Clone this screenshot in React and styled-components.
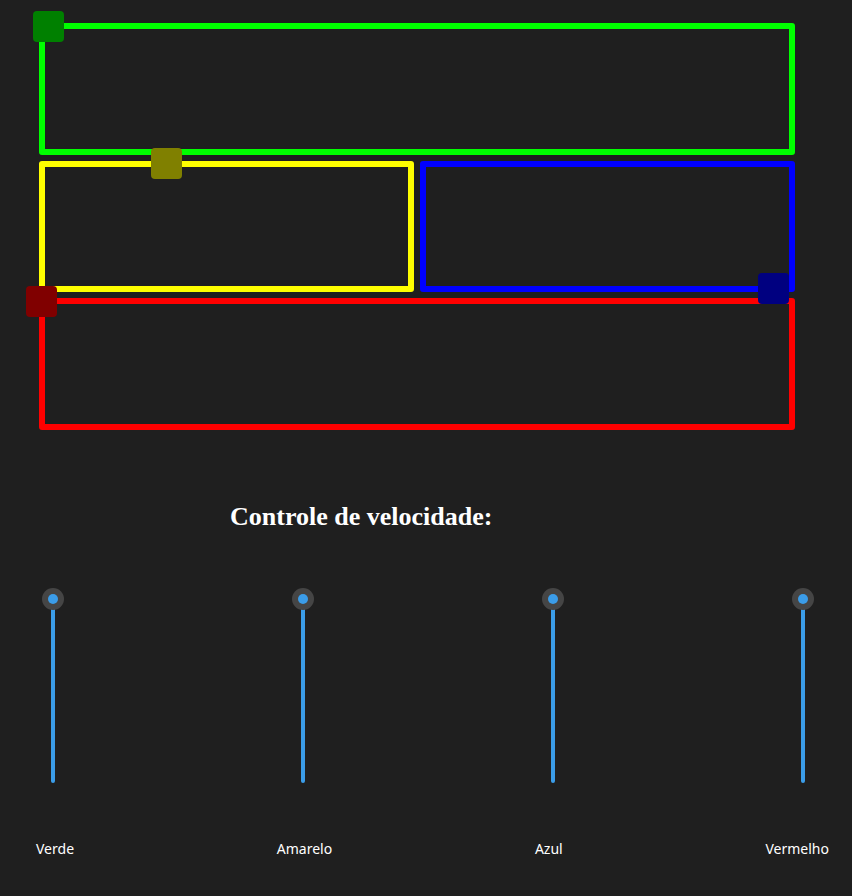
import React from "react";
import styled, { createGlobalStyle } from "styled-components";

const GlobalStyle = createGlobalStyle`
  html, body {
    margin: 0;
    padding: 0;
    background: #1f1f1f;
  }
  body {
    font-family: "Noto Sans", "Liberation Sans", sans-serif;
    color: #ffffff;
  }
`;

const tracks = [
  { name: "verde", line: "#00ff00", span: 2, height: 132 },
  { name: "amarelo", line: "#ffff00", span: 1, height: 131 },
  { name: "azul", line: "#0000ff", span: 1, height: 131 },
  { name: "vermelho", line: "#ff0000", span: 2, height: 132 },
];

// trens sobre os trilhos (posição relativa ao canto do mapa)
const trains = [
  { name: "verde", color: "#008000", x: -6, y: -12 },
  { name: "amarelo", color: "#808000", x: 112, y: 125 },
  { name: "azul", color: "#000080", x: 719, y: 250 },
  { name: "vermelho", color: "#800000", x: -13, y: 263 },
];

const labels = ["Verde", "Amarelo", "Azul", "Vermelho"];

const Page = styled.div`
  width: 852px;
  height: 896px;
  padding-top: 23px;
  box-sizing: border-box;
  overflow: hidden;
`;

const Map = styled.div`
  position: relative;
  margin-left: 39px;
  width: 756px;
  display: grid;
  grid-template-columns: 1fr 1fr;
  gap: 6px;
`;

const Track = styled.div`
  grid-column: span ${(p) => p.span};
  height: ${(p) => p.h}px;
  box-sizing: border-box;
  border: 6px solid ${(p) => p.color};
  border-radius: 3px;
`;

const Train = styled.div`
  position: absolute;
  width: 31px;
  height: 31px;
  border-radius: 4px;
  background: ${(p) => p.color};
`;

const Title = styled.h2`
  margin: 72px 0 0 230px;
  font-family: "Liberation Serif", "Times New Roman", serif;
  font-size: 26px;
  font-weight: bold;
  color: #ffffff;
`;

const SliderRow = styled.div`
  margin-top: 56px;
  padding: 0 38px 0 42px;
  display: flex;
  justify-content: space-between;
`;

const Slider = styled.div`
  width: 22px;
  display: flex;
  flex-direction: column;
  align-items: center;
`;

const Thumb = styled.div`
  position: relative;
  z-index: 1;
  width: 22px;
  height: 22px;
  border-radius: 50%;
  background: #454545;
  display: flex;
  align-items: center;
  justify-content: center;
`;

const Dot = styled.div`
  width: 10px;
  height: 10px;
  border-radius: 50%;
  background: #3b9de9;
`;

const Rail = styled.div`
  margin-top: -11px;
  width: 4px;
  height: 184px;
  border-radius: 2px;
  background: #3b9de9;
`;

const LabelRow = styled.div`
  margin-top: 56px;
  padding: 0 23px 0 36px;
  display: flex;
  justify-content: space-between;
`;

const Label = styled.span`
  font-size: 14px;
  color: #ffffff;
`;

export default function App() {
  return (
    <Page>
      <GlobalStyle />
      <Map>
        {tracks.map((t) => (
          <Track key={t.name} color={t.line} span={t.span} h={t.height} />
        ))}
        {trains.map((t) => (
          <Train key={t.name} color={t.color} style={{ left: t.x, top: t.y }} />
        ))}
      </Map>

      <Title>Controle de velocidade:</Title>

      <SliderRow>
        {labels.map((l) => (
          <Slider key={l}>
            <Thumb>
              <Dot />
            </Thumb>
            <Rail />
          </Slider>
        ))}
      </SliderRow>

      <LabelRow>
        {labels.map((l) => (
          <Label key={l}>{l}</Label>
        ))}
      </LabelRow>
    </Page>
  );
}
